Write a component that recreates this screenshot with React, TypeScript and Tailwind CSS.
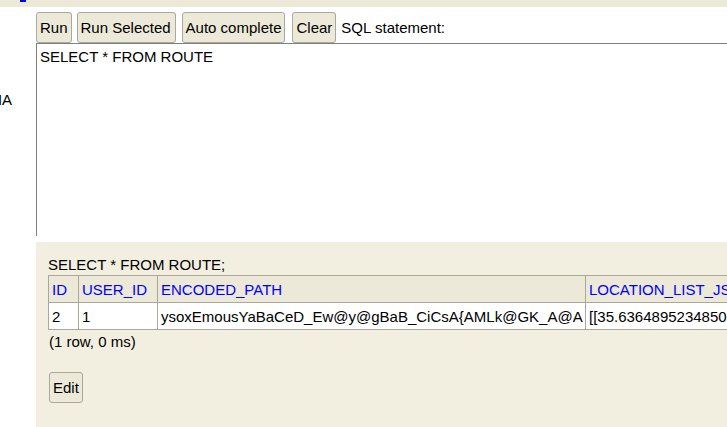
export default function App() {
  const btn =
    "h-[31px] px-[3px] rounded-[3px] border border-[#aaa89c] bg-[#ece9d8] text-[15px] leading-[17px] text-black whitespace-nowrap";
  const cell = "border border-[#aca899] px-[3px] h-[27px] whitespace-nowrap text-left font-normal";

  return (
    <div className="w-[727px] h-[427px] overflow-hidden bg-white text-black font-['Liberation_Sans',Arial,sans-serif] text-[15px] leading-[17px]">
      <div className="h-[7px] bg-[#ece9d8]">
        <div className="ml-[20px] w-[6px] h-[2px] bg-[#0000ee]" />
      </div>
      <div className="flex h-[420px]">
        <div className="w-[36px] shrink-0 overflow-hidden pt-[84px]">
          <div className="flex justify-end whitespace-nowrap">
            <span className="mr-[24px]">HEMA</span>
          </div>
        </div>
        <div className="flex-1 min-w-0 flex flex-col">
          <div className="flex items-center gap-[5px] pt-[5px]">
            <button className={btn}>Run</button>
            <button className={btn + " pr-[4px]"}>Run Selected</button>
            <button className={btn + " ml-[1px]"}>Auto complete</button>
            <button className={btn + " ml-[2px]"}>Clear</button>
            <span>SQL statement:</span>
          </div>
          <div className="h-[193px] w-[720px] border-t border-l border-[#7f7f7f] pl-[3px] pt-[4px] whitespace-pre">
            SELECT * FROM ROUTE
          </div>
          <div className="mt-[6px] flex-1 bg-[#f2efe1] pl-[12px] pt-[14px]">
            <div className="whitespace-nowrap">SELECT * FROM ROUTE;</div>
            <table className="mt-[2px] border-collapse table-fixed w-[760px]">
              <colgroup>
                <col className="w-[30px]" />
                <col className="w-[79px]" />
                <col className="w-[428px]" />
                <col />
              </colgroup>
              <thead>
                <tr className="bg-[#ece9d8] text-[#0000ff]">
                  <th className={cell}>ID</th>
                  <th className={cell}>USER_ID</th>
                  <th className={cell}>ENCODED_PATH</th>
                  <th className={cell + " overflow-hidden"}>LOCATION_LIST_JSON</th>
                </tr>
              </thead>
              <tbody>
                <tr className="bg-white">
                  <td className={cell}>2</td>
                  <td className={cell}>1</td>
                  <td className={cell}>ysoxEmousYaBaCeD_Ew@y@gBaB_CiCsA{"{"}AMLk@GK_A@A</td>
                  <td className={cell + " overflow-hidden"}>[[35.63648952348500,139.7387</td>
                </tr>
              </tbody>
            </table>
            <div className="mt-[3px] pl-[1px]">(1 row, 0 ms)</div>
            <button className={btn + " mt-[22px] ml-[1px] h-[30px]"}>Edit</button>
          </div>
        </div>
      </div>
    </div>
  );
}
